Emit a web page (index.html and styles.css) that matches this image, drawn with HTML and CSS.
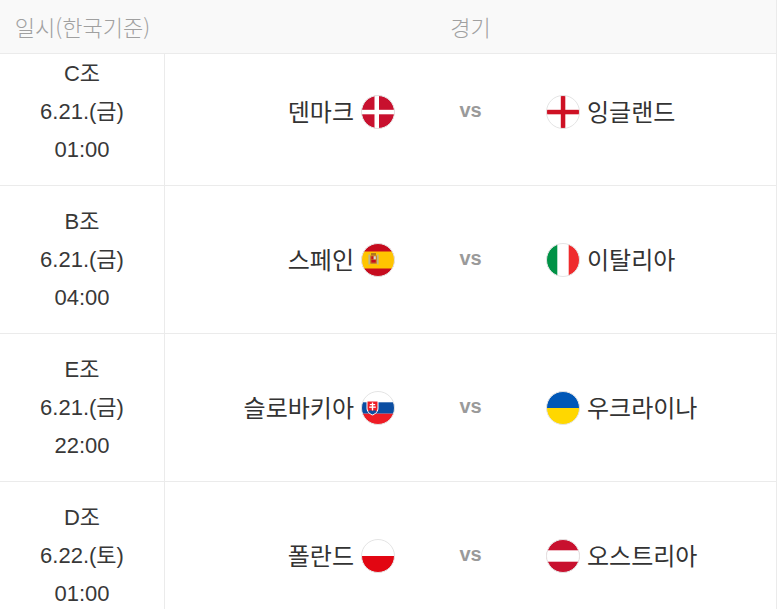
FILE: index.html
```html
<!DOCTYPE html>
<html lang="ko">
<head>
<meta charset="utf-8">
<link rel="stylesheet" href="styles.css">
</head>
<body>
<div class="table">
  <div class="head">
    <div class="head-date">일시(한국기준)</div>
    <div class="head-match">경기</div>
  </div>

  <div class="row row-first">
    <div class="date">C조<br>6.21.(금)<br>01:00</div>
    <div class="match">
      <div class="team home"><span>덴마크</span>
        <svg class="flag" viewBox="0 0 34 34"><defs><clipPath id="c1"><circle cx="17" cy="17" r="16.5"/></clipPath></defs><g clip-path="url(#c1)"><rect width="34" height="34" fill="#c8102e"/><rect x="13.5" width="4.5" height="34" fill="#fff"/><rect y="14.8" width="34" height="4.5" fill="#fff"/></g><circle cx="17" cy="17" r="16.5" fill="none" stroke="#e4e4e4"/></svg>
      </div>
      <div class="vs">vs</div>
      <div class="team away">
        <svg class="flag" viewBox="0 0 34 34"><defs><clipPath id="c2"><circle cx="17" cy="17" r="16.5"/></clipPath></defs><g clip-path="url(#c2)"><rect width="34" height="34" fill="#fff"/><rect x="14.8" width="4.5" height="34" fill="#ce1124"/><rect y="14.8" width="34" height="4.5" fill="#ce1124"/></g><circle cx="17" cy="17" r="16.5" fill="none" stroke="#e4e4e4"/></svg>
        <span>잉글랜드</span></div>
    </div>
  </div>

  <div class="row">
    <div class="date">B조<br>6.21.(금)<br>04:00</div>
    <div class="match">
      <div class="team home"><span>스페인</span>
        <svg class="flag" viewBox="0 0 34 34"><defs><clipPath id="c3"><circle cx="17" cy="17" r="16.5"/></clipPath></defs><g clip-path="url(#c3)"><rect width="34" height="34" fill="#c60b1e"/><rect y="8.5" width="34" height="17" fill="#ffc400"/><rect x="9" y="12" width="7" height="9" rx="1.5" fill="#c8842a"/><rect x="10.3" y="13.3" width="2" height="3" fill="#c60b1e"/><rect x="12.8" y="13.3" width="2" height="3" fill="#d9d9d9"/><rect x="10.3" y="16.8" width="4.5" height="2.8" fill="#c60b1e"/><rect x="7.5" y="11.5" width="1.3" height="10" fill="#b0b0b0"/><rect x="16.2" y="11.5" width="1.3" height="10" fill="#b0b0b0"/><rect x="10" y="10" width="5" height="2" fill="#b07a1e"/></g><circle cx="17" cy="17" r="16.5" fill="none" stroke="#e4e4e4"/></svg>
      </div>
      <div class="vs">vs</div>
      <div class="team away">
        <svg class="flag" viewBox="0 0 34 34"><defs><clipPath id="c4"><circle cx="17" cy="17" r="16.5"/></clipPath></defs><g clip-path="url(#c4)"><rect width="34" height="34" fill="#fff"/><rect width="11.3" height="34" fill="#009246"/><rect x="22.7" width="11.3" height="34" fill="#ef2b2d"/></g><circle cx="17" cy="17" r="16.5" fill="none" stroke="#e4e4e4"/></svg>
        <span>이탈리아</span></div>
    </div>
  </div>

  <div class="row">
    <div class="date">E조<br>6.21.(금)<br>22:00</div>
    <div class="match">
      <div class="team home"><span>슬로바키아</span>
        <svg class="flag" viewBox="0 0 34 34"><defs><clipPath id="c5"><circle cx="17" cy="17" r="16.5"/></clipPath></defs><g clip-path="url(#c5)"><rect width="34" height="34" fill="#fff"/><rect y="11.3" width="34" height="11.4" fill="#0b4ea2"/><rect y="22.7" width="34" height="11.3" fill="#ee1c25"/><path d="M5.5 9.5h12v7.5c0 4-3 6.2-6 7.5-3-1.3-6-3.5-6-7.5z" fill="#fff"/><path d="M6.5 10.5h10v6.5c0 3.4-2.5 5.2-5 6.3-2.5-1.1-5-2.9-5-6.3z" fill="#ee1c25"/><rect x="10.8" y="11.5" width="1.4" height="8" fill="#fff"/><rect x="8.8" y="13" width="5.4" height="1.2" fill="#fff"/><rect x="8.2" y="15.5" width="6.6" height="1.3" fill="#fff"/><path d="M7.3 20.5c1.2-1.6 2.5-1.6 4.2-.6 1.7-1 3-1 4.2.6-1.2 1.5-2.6 2.3-4.2 3-1.6-.7-3-1.5-4.2-3z" fill="#0b4ea2"/></g><circle cx="17" cy="17" r="16.5" fill="none" stroke="#e4e4e4"/></svg>
      </div>
      <div class="vs">vs</div>
      <div class="team away">
        <svg class="flag" viewBox="0 0 34 34"><defs><clipPath id="c6"><circle cx="17" cy="17" r="16.5"/></clipPath></defs><g clip-path="url(#c6)"><rect width="34" height="17" fill="#0057b7"/><rect y="17" width="34" height="17" fill="#ffd700"/></g><circle cx="17" cy="17" r="16.5" fill="none" stroke="#e4e4e4"/></svg>
        <span>우크라이나</span></div>
    </div>
  </div>

  <div class="row">
    <div class="date">D조<br>6.22.(토)<br>01:00</div>
    <div class="match">
      <div class="team home"><span>폴란드</span>
        <svg class="flag" viewBox="0 0 34 34"><defs><clipPath id="c7"><circle cx="17" cy="17" r="16.5"/></clipPath></defs><g clip-path="url(#c7)"><rect width="34" height="17" fill="#fff"/><rect y="17" width="34" height="17" fill="#e20612"/></g><circle cx="17" cy="17" r="16.5" fill="none" stroke="#e4e4e4"/></svg>
      </div>
      <div class="vs">vs</div>
      <div class="team away">
        <svg class="flag" viewBox="0 0 34 34"><defs><clipPath id="c8"><circle cx="17" cy="17" r="16.5"/></clipPath></defs><g clip-path="url(#c8)"><rect width="34" height="34" fill="#c8102e"/><rect y="11.3" width="34" height="11.4" fill="#fff"/></g><circle cx="17" cy="17" r="16.5" fill="none" stroke="#e4e4e4"/></svg>
        <span>오스트리아</span></div>
    </div>
  </div>
</div>
</body>
</html>
```
FILE: styles.css
```css
html, body {
  margin: 0;
  padding: 0;
  background: #fff;
  overflow: hidden;
}
body {
  font-family: "Liberation Sans", "Noto Sans CJK KR", sans-serif;
  color: #333;
}
.table {
  width: 777px;
  box-sizing: border-box;
  border-right: 1px solid #ebebeb;
}
.head {
  position: relative;
  z-index: 1;
  display: grid;
  grid-template-columns: 165px 1fr;
  height: 54px;
  box-sizing: border-box;
  background: #f9f9f9;
  border-bottom: 1px solid #ebebeb;
  color: #a0a0a0;
  font-size: 22px;
  font-family: "Noto Sans CJK KR", sans-serif;
  font-weight: 300;
}
.head-date, .head-match {
  display: flex;
  align-items: center;
  justify-content: center;
  padding-bottom: 1px;
}
.row {
  display: grid;
  grid-template-columns: 165px 1fr;
  border-bottom: 1px solid #ebebeb;
}
.row-first {
  margin-top: -16px;
}
.date {
  border-right: 1px solid #ebebeb;
  text-align: center;
  font-size: 22px;
  line-height: 38px;
  padding: 17px 0 16px;
  color: #383838;
}
.match {
  display: grid;
  grid-template-columns: 1fr 151px 1fr;
  align-items: center;
}
.team {
  display: flex;
  align-items: center;
  gap: 7px;
  font-size: 24px;
}
.team span {
  font-family: "Noto Sans CJK KR", sans-serif;
  color: #333;
  padding-bottom: 3px;
}
.home {
  justify-content: flex-end;
}
.away {
  justify-content: flex-start;
}
.vs {
  text-align: center;
  font-weight: bold;
  font-size: 20px;
  color: #9a9a9a;
  padding-bottom: 2px;
}
.flag {
  width: 34px;
  height: 34px;
  flex: none;
}
```
